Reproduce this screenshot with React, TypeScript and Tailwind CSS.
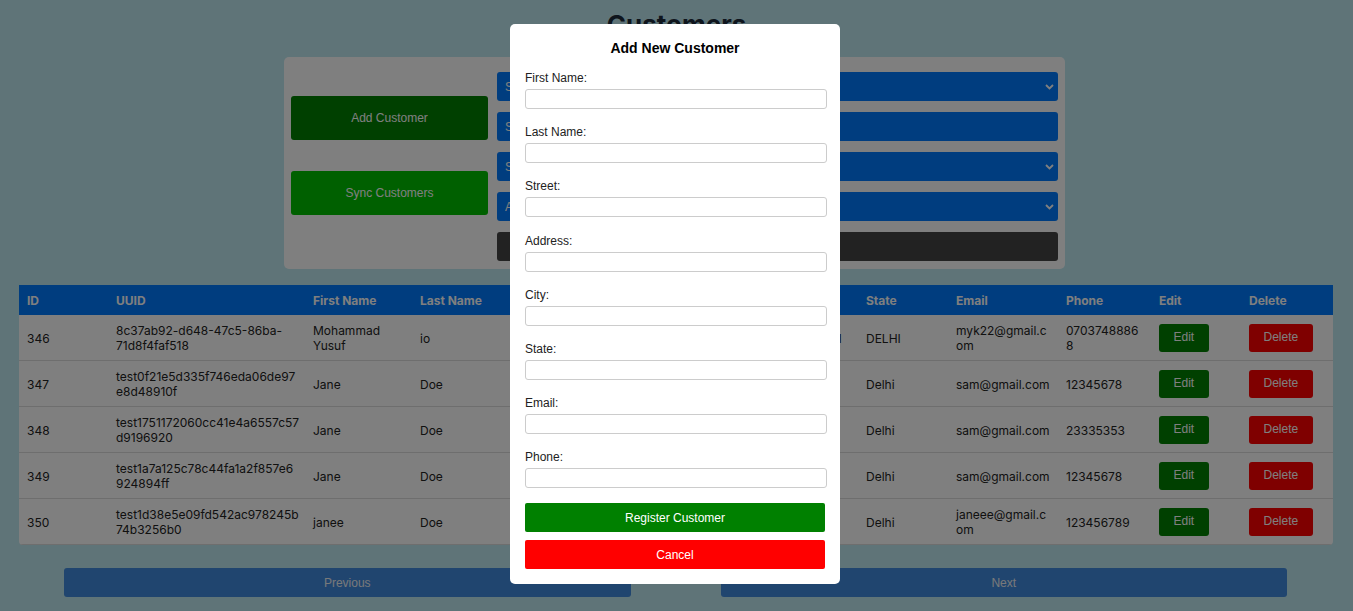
import { useState } from "react";

interface Customer {
  id: number;
  uuid: string;
  firstName: string;
  lastName: string;
  street: string;
  address: string;
  city: string;
  state: string;
  email: string;
  phone: string;
}

const customers: Customer[] = [
  {
    id: 346,
    uuid: "8c37ab92-d648-47c5-86ba-71d8f4faf518",
    firstName: "Mohammad Yusuf",
    lastName: "io",
    street: "Main St",
    address: "12",
    city: "DELHI",
    state: "DELHI",
    email: "myk22@gmail.com",
    phone: "07037488868",
  },
  {
    id: 347,
    uuid: "test0f21e5d335f746eda06de97e8d48910f",
    firstName: "Jane",
    lastName: "Doe",
    street: "MG Road",
    address: "22",
    city: "Delhi",
    state: "Delhi",
    email: "sam@gmail.com",
    phone: "12345678",
  },
  {
    id: 348,
    uuid: "test1751172060cc41e4a6557c57d9196920",
    firstName: "Jane",
    lastName: "Doe",
    street: "MG Road",
    address: "22",
    city: "Delhi",
    state: "Delhi",
    email: "sam@gmail.com",
    phone: "23335353",
  },
  {
    id: 349,
    uuid: "test1a7a125c78c44fa1a2f857e6924894ff",
    firstName: "Jane",
    lastName: "Doe",
    street: "MG Road",
    address: "22",
    city: "Delhi",
    state: "Delhi",
    email: "sam@gmail.com",
    phone: "12345678",
  },
  {
    id: 350,
    uuid: "test1d38e5e09fd542ac978245b74b3256b0",
    firstName: "janee",
    lastName: "Doe",
    street: "MG Road",
    address: "22",
    city: "Delhi",
    state: "Delhi",
    email: "janeee@gmail.com",
    phone: "123456789",
  },
];

const fields = ["First Name", "Last Name", "Street", "Address", "City", "State", "Email", "Phone"];

const Chevron = () => (
  <svg
    className="absolute right-[4px] top-1/2 -translate-y-1/2 pointer-events-none"
    width="9"
    height="6"
    viewBox="0 0 9 6"
    fill="none"
  >
    <polyline points="1,1 4.5,4.5 8,1" stroke="white" strokeWidth="1.8" />
  </svg>
);

const SelectBox = ({ label }: { label: string }) => (
  <div className="relative h-[29px]">
    <select className="appearance-none w-full h-full bg-[#007bff] text-white text-[12px] pl-[8px] rounded-[3px] outline-none">
      <option>{label}</option>
    </select>
    <Chevron />
  </div>
);

const App = () => {
  const [open, setOpen] = useState(true);

  return (
    <div className="min-h-[611px] bg-[#bee8f0] font-['Inter',sans-serif] text-[#222]">
      <h1 className="text-center text-[26px] font-bold leading-[32px] pt-[9px] text-[#1c2b3a]">Customers</h1>

      <div className="ml-[284px] mt-[16px] w-[781px] bg-white rounded-[5px] pt-[15px] pb-[8px] px-[7px] flex gap-[9px] font-['Liberation_Sans',Arial,sans-serif]">
        <div className="w-[197px] flex flex-col gap-[31px] pt-[24px]">
          <button className="h-[44px] bg-[#008000] text-white text-[12px] rounded-[3px]">Add Customer</button>
          <button className="h-[44px] bg-[#00c000] text-white text-[12px] rounded-[3px]">Sync Customers</button>
        </div>
        <div className="flex-1 flex flex-col gap-[11px]">
          <SelectBox label="Sort by ID" />
          <input
            className="h-[29px] bg-[#007bff] text-white placeholder:text-white text-[12px] pl-[8px] rounded-[3px] outline-none"
            placeholder="Search customers..."
          />
          <SelectBox label="Select State" />
          <SelectBox label="All Cities" />
          <button className="h-[29px] bg-[#444] text-white text-[12px] rounded-[3px]">Reset Filters</button>
        </div>
      </div>

      <div className="ml-[19px] mr-[20px] mt-[16px] bg-white rounded-b-[4px] overflow-hidden">
        <table className="w-full table-fixed text-[12px] leading-[15px] text-left">
          <colgroup>
            <col className="w-[89px]" />
            <col className="w-[197px]" />
            <col className="w-[107px]" />
            <col className="w-[95px]" />
            <col className="w-[130px]" />
            <col className="w-[162px]" />
            <col className="w-[59px]" />
            <col className="w-[90px]" />
            <col className="w-[110px]" />
            <col className="w-[93px]" />
            <col className="w-[90px]" />
            <col className="w-[92px]" />
          </colgroup>
          <thead className="bg-[#007bff] text-white">
            <tr>
              {["ID", "UUID", "First Name", "Last Name", "Street", "Address", "City", "State", "Email", "Phone", "Edit", "Delete"].map(
                (h) => (
                  <th key={h} className="px-[8px] py-[7.5px] font-bold">
                    {h}
                  </th>
                )
              )}
            </tr>
          </thead>
          <tbody>
            {customers.map((c) => (
              <tr key={c.id} className="border-b border-[#ddd]">
                {[c.id, c.uuid, c.firstName, c.lastName, c.street, c.address, c.city, c.state, c.email, c.phone].map(
                  (v, i) => (
                    <td
                      key={i}
                      className={`pl-[8px] ${i === 1 ? "pr-[5px]" : "pr-[8px]"} pt-[8px] pb-[7px] [overflow-wrap:anywhere] align-middle`}
                    >
                      {v}
                    </td>
                  )
                )}
                <td className="px-[8px] align-middle">
                  <button className="h-[28px] px-[14.5px] bg-[#008000] text-white text-[12px] rounded-[3px] font-['Liberation_Sans',Arial,sans-serif]">
                    Edit
                  </button>
                </td>
                <td className="px-[8px] align-middle">
                  <button className="h-[28px] px-[14.5px] bg-[#ff0000] text-white text-[12px] rounded-[3px] font-['Liberation_Sans',Arial,sans-serif]">
                    Delete
                  </button>
                </td>
              </tr>
            ))}
          </tbody>
        </table>
      </div>

      <div className="flex gap-[90px] pl-[64px] pr-[66px] mt-[23px] font-['Liberation_Sans',Arial,sans-serif]">
        <button className="flex-1 h-[29px] bg-[#408ade] text-[#f0f2f5] text-[12px] rounded-[3px]">Previous</button>
        <button className="flex-1 h-[29px] bg-[#408ade] text-[#f0f2f5] text-[12px] rounded-[3px]">Next</button>
      </div>

      {open && (
        <div className="fixed inset-0 bg-black/50 flex justify-center items-start pt-[24px] pr-[3px]">
          <div className="w-[330px] bg-white rounded-[5px] px-[15px] pt-[16px] pb-[15px] font-['Liberation_Sans',Arial,sans-serif] text-[#222]">
            <h3 className="text-center text-[14px] font-bold leading-[16px] text-black mb-[15px]">Add New Customer</h3>
            <form onSubmit={(e) => e.preventDefault()}>
              {fields.map((f, i) => (
                <div key={f} className={i === fields.length - 1 ? "mb-[15px]" : "mb-[16.2px]"}>
                  <label className="block text-[12px] leading-[14px] mb-[4px]">{f}:</label>
                  <input className="block w-[302px] h-[20px] border border-[#ccc] rounded-[3px] outline-none px-[4px] text-[12px]" />
                </div>
              ))}
              <button type="submit" className="block w-[300px] h-[29px] bg-[#008000] text-white text-[12px] rounded-[2px]">
                Register Customer
              </button>
              <button
                type="button"
                onClick={() => setOpen(false)}
                className="block w-[300px] h-[29px] mt-[8px] bg-[#ff0000] text-white text-[12px] rounded-[2px]"
              >
                Cancel
              </button>
            </form>
          </div>
        </div>
      )}
    </div>
  );
};

export default App;
